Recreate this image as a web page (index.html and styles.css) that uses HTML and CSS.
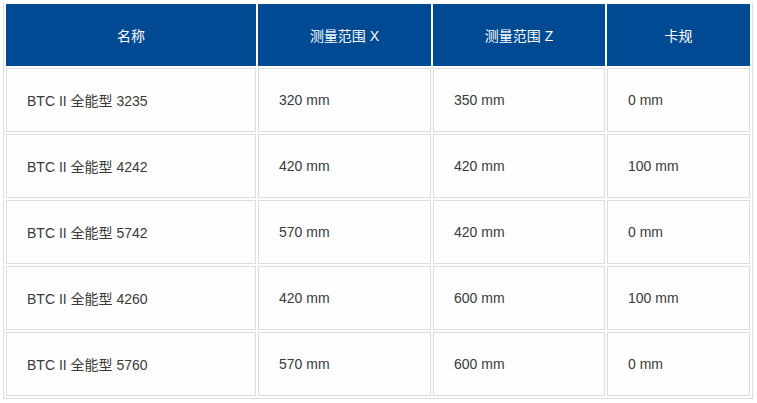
FILE: index.html
```html
<!DOCTYPE html>
<html lang="zh-CN">
<head>
<meta charset="utf-8">
<link rel="stylesheet" href="styles.css">
</head>
<body>
<table class="spec">
  <colgroup>
    <col class="c1"><col class="c2"><col class="c3"><col class="c4">
  </colgroup>
  <thead>
    <tr><th>名称</th><th>测量范围 X</th><th>测量范围 Z</th><th>卡规</th></tr>
  </thead>
  <tbody>
    <tr><td>BTC II 全能型 3235</td><td>320 mm</td><td>350 mm</td><td>0 mm</td></tr>
    <tr><td>BTC II 全能型 4242</td><td>420 mm</td><td>420 mm</td><td>100 mm</td></tr>
    <tr><td>BTC II 全能型 5742</td><td>570 mm</td><td>420 mm</td><td>0 mm</td></tr>
    <tr><td>BTC II 全能型 4260</td><td>420 mm</td><td>600 mm</td><td>100 mm</td></tr>
    <tr><td>BTC II 全能型 5760</td><td>570 mm</td><td>600 mm</td><td>0 mm</td></tr>
  </tbody>
</table>
</body>
</html>
```
FILE: styles.css
```css
html, body {
  margin: 0;
  padding: 0;
  background: #ffffff;
}
body {
  padding: 2px 0 0 3px;
  font-family: "Liberation Sans", Arial, "Noto Sans CJK SC", sans-serif;
  font-size: 14px;
}
.spec {
  table-layout: fixed;
  width: 750px;
  border-collapse: separate;
  border-spacing: 2px;
  border: 1px solid #dddddd;
  border-top: 0;
}
.c1 { width: 250px; }
.c2 { width: 173px; }
.c3 { width: 172px; }
.c4 { width: 143px; }
.spec th {
  box-sizing: border-box;
  height: 62px;
  background: #004a93;
  border: 1px solid #004a93;
  color: #ffffff;
  font-weight: normal;
  text-align: center;
  vertical-align: middle;
  padding: 0;
}
.spec td {
  box-sizing: border-box;
  height: 64px;
  border: 1px solid #dddddd;
  background: #fefefe;
  color: #3a3a3a;
  text-align: left;
  vertical-align: middle;
  padding: 0 0 0 20px;
}
```
